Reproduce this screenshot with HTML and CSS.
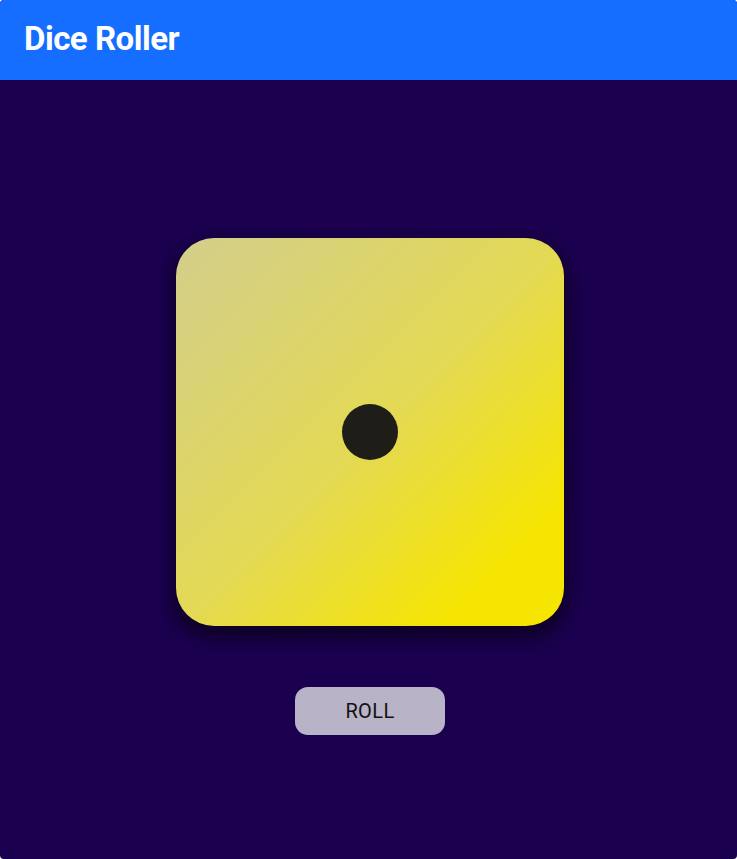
FILE: index.html
```html
<!DOCTYPE html>
<html lang="en">
<head>
<meta charset="utf-8">
<title>Dice Roller</title>
<link rel="stylesheet" href="styles.css">
</head>
<body>
<div class="app">
  <header class="topbar">
    <h1 class="title">Dice Roller</h1>
  </header>
  <main class="stage">
    <div class="die">
      <span class="pip"></span>
    </div>
    <button class="roll" type="button">ROLL</button>
  </main>
</div>
</body>
</html>
```
FILE: styles.css
```css
html, body {
  margin: 0;
  padding: 0;
  height: 100%;
  background: #ffffff;
}
body {
  font-family: Roboto, "Noto Sans", sans-serif;
}
.app {
  height: 859px;
  display: flex;
  flex-direction: column;
  background: #1b004f;
  border-radius: 4px;
  overflow: hidden;
}
.topbar {
  height: 80px;
  flex: none;
  background: #156eff;
  display: flex;
  align-items: center;
  padding: 0 24px;
  box-sizing: border-box;
}
.title {
  margin: 0;
  color: #ffffff;
  font-size: 33px;
  font-weight: 700;
  letter-spacing: -0.5px;
  line-height: 1;
  padding-bottom: 4px;
}
.stage {
  flex: 1;
  display: flex;
  flex-direction: column;
  align-items: center;
  padding-top: 158px;
  padding-left: 3px;
}
.die {
  width: 388px;
  height: 388px;
  border-radius: 38px;
  background: linear-gradient(135deg, #d3ce8c 0%, #e3d955 50%, #f6e500 85%, #f6e500 100%);
  box-shadow: 0 8px 18px 4px rgba(0, 0, 0, 0.55);
  display: flex;
  align-items: center;
  justify-content: center;
}
.pip {
  width: 56px;
  height: 56px;
  border-radius: 50%;
  background: #1f1d18;
}
.roll {
  margin-top: 61px;
  width: 150px;
  height: 48px;
  border: none;
  border-radius: 13px;
  background: #b8b3c6;
  color: #111111;
  font-family: Roboto, "Noto Sans", sans-serif;
  font-size: 20px;
  font-weight: 400;
  letter-spacing: 0.4px;
  cursor: pointer;
}
```
